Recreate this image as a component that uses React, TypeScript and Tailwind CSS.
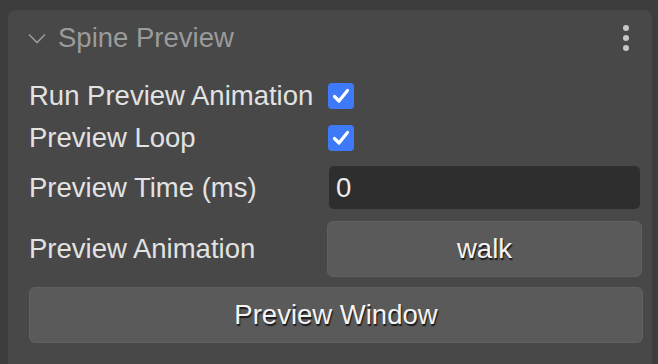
import React from "react";

function Check() {
  return (
    <div className="ml-[-1px] flex h-[26px] w-[26px] items-center justify-center rounded-[4px] bg-[#3e79f7]">
      <svg width="18" height="16" viewBox="0 0 18 16" fill="none">
        <path d="M2.5 8.5 L7 13 L15.5 2.5" stroke="white" strokeWidth="3.2" strokeLinecap="round" strokeLinejoin="round" />
      </svg>
    </div>
  );
}

function Label({ children }: { children: React.ReactNode }) {
  return <span className="w-[300px] shrink-0 text-[#e2e2e2]">{children}</span>;
}

export default function App() {
  return (
    <div className="h-[364px] w-[658px] overflow-hidden bg-[#3d3d3d] pl-[8px] pr-[6px] pt-[10px] font-['Liberation_Sans',Arial,sans-serif] text-[27.5px] leading-none">
      <div className="flex h-[400px] flex-col rounded-t-[8px] bg-[#484848] pl-[21px] pr-[10px]">
        <div className="flex h-[56px] shrink-0 items-center">
          <svg width="18" height="11" viewBox="0 0 18 11" fill="none" className="ml-[-1px]">
            <path d="M1 1.5 L9 9.5 L17 1.5" stroke="#9a9a9a" strokeWidth="1.6" />
          </svg>
          <span className="ml-[12px] text-[#9b9b9b]">Spine Preview</span>
          <div className="ml-auto mr-[13px] flex flex-col gap-[4px]">
            <span className="h-[6px] w-[6px] rounded-full bg-[#c6c6c6]" />
            <span className="h-[6px] w-[6px] rounded-full bg-[#c6c6c6]" />
            <span className="h-[6px] w-[6px] rounded-full bg-[#c6c6c6]" />
          </div>
        </div>

        <div className="mt-[9px] flex h-[42px] items-center">
          <Label>Run Preview Animation</Label>
          <Check />
        </div>
        <div className="flex h-[42px] items-center">
          <Label>Preview Loop</Label>
          <Check />
        </div>

        <div className="mt-[7px] flex h-[43px] items-center">
          <Label>Preview Time (ms)</Label>
          <div className="flex h-[43px] w-[311px] items-center rounded-[5px] bg-[#2e2e2e] pl-[7px] text-[#ececec]">
            0
          </div>
        </div>

        <div className="mt-[12px] flex h-[56px] items-center">
          <span className="w-[298px] shrink-0 text-[#e2e2e2]">Preview Animation</span>
          <button className="flex h-[56px] w-[315px] items-center justify-center rounded-[6px] border border-[#606060] bg-[#5a5a5a] font-['Liberation_Sans',Arial,sans-serif] text-[#f4f4f4] [text-shadow:1px_2px_1px_#1a1a1a]">
            walk
          </button>
        </div>

        <button className="mt-[10px] flex h-[56px] w-[614px] items-center justify-center rounded-[6px] border border-[#606060] bg-[#5a5a5a] font-['Liberation_Sans',Arial,sans-serif] text-[#f4f4f4] [text-shadow:1px_2px_1px_#1a1a1a]">
          Preview Window
        </button>
      </div>
    </div>
  );
}
